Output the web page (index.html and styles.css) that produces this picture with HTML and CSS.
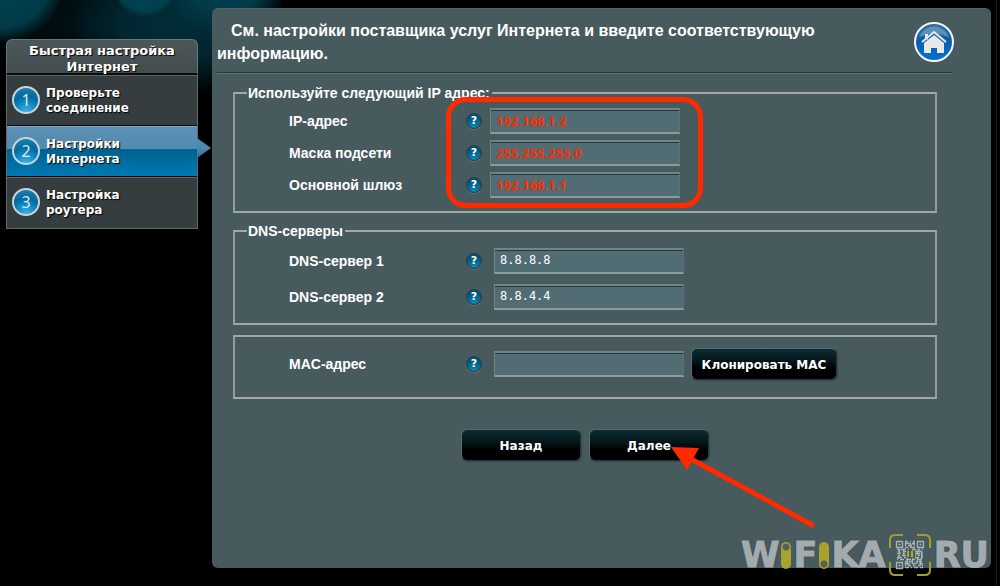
FILE: index.html
```html
<!DOCTYPE html>
<html lang="ru">
<head>
<meta charset="utf-8">
<title>Быстрая настройка Интернет</title>
<link rel="stylesheet" href="styles.css">
</head>
<body>
<div class="page">
  <nav class="wizard">
    <h2 class="wizard-title">Быстрая настройка Интернет</h2>
    <ol class="steps">
      <li class="step"><span class="step-number">1</span><span>Проверьте<br>соединение</span></li>
      <li class="step step-active" aria-current="step"><span class="step-number">2</span><span>Настройки<br>Интернета</span></li>
      <li class="step"><span class="step-number">3</span><span>Настройка<br>роутера</span></li>
    </ol>
  </nav>

  <main class="panel">
    <header class="panel-header">
      <h1 class="panel-title">См. настройки поставщика услуг Интернета и введите соответствующую информацию.</h1>
      <a class="home" href="#" aria-label="Главная">
        <svg width="42" height="42" viewBox="0 0 42 42">
          <defs>
            <linearGradient id="homeFill" x1="0" y1="0" x2="0" y2="1">
              <stop offset="0" stop-color="#3b7298"/><stop offset=".45" stop-color="#075dad"/><stop offset="1" stop-color="#0872d2"/>
            </linearGradient>
          </defs>
          <circle cx="21" cy="21" r="19" fill="url(#homeFill)" stroke="#f4f7f8" stroke-width="2"/>
          <path d="M6 16a16 16 0 0 1 30 0q-15-7-30 0z" fill="#8bb4c9" opacity=".55"/>
          <path d="M12 13h3v6h-3zM11 22l10-8 10 8v10h-7v-5h-6v5h-7z" fill="#e6e8e9"/>
          <path d="M9 22.500 21 12.300l12 10.200" fill="none" stroke="#2d73ab" stroke-width="1"/>
          <path d="M9 21 21 11l12 10" fill="none" stroke="#e6e8e9" stroke-width="2"/>
        </svg>
      </a>
    </header>

    <form class="form">
      <fieldset class="group group-ip">
        <legend>Используйте следующий IP адрес:</legend>
        <div class="row">
          <label for="ip">IP-адрес</label>
          <button type="button" class="help" aria-label="Справка: IP-адрес">?</button>
          <input id="ip" class="field field-marked" type="text" value="192.168.1.2">
        </div>
        <div class="row">
          <label for="mask">Маска подсети</label>
          <button type="button" class="help" aria-label="Справка: маска подсети">?</button>
          <input id="mask" class="field field-marked" type="text" value="255.255.255.0">
        </div>
        <div class="row">
          <label for="gateway">Основной шлюз</label>
          <button type="button" class="help" aria-label="Справка: основной шлюз">?</button>
          <input id="gateway" class="field field-marked" type="text" value="192.168.1.1">
        </div>
        <div class="callout"></div>
      </fieldset>

      <fieldset class="group group-dns">
        <legend>DNS-серверы</legend>
        <div class="row">
          <label for="dns1">DNS-сервер 1</label>
          <button type="button" class="help" aria-label="Справка: DNS-сервер 1">?</button>
          <input id="dns1" class="field" type="text" value="8.8.8.8">
        </div>
        <div class="row">
          <label for="dns2">DNS-сервер 2</label>
          <button type="button" class="help" aria-label="Справка: DNS-сервер 2">?</button>
          <input id="dns2" class="field" type="text" value="8.8.4.4">
        </div>
      </fieldset>

      <fieldset class="group group-mac">
        <div class="row">
          <label for="mac">MAC-адрес</label>
          <button type="button" class="help" aria-label="Справка: MAC-адрес">?</button>
          <input id="mac" class="field" type="text">
          <button type="button" class="button button-clone">Клонировать MAC</button>
        </div>
      </fieldset>

      <div class="actions">
        <button type="button" class="button">Назад</button>
        <div class="next">
          <button type="submit" class="button">Далее</button>
          <svg class="arrow" width="148" height="84" viewBox="0 0 148 84">
            <path d="M20 12 143 79" stroke="#ff2a00" stroke-width="5"/>
            <path d="M0 0 28 1 16 23z" fill="#ff2a00"/>
          </svg>
        </div>
      </div>
    </form>
  </main>
</div>

<div class="watermark">
  <span>W</span><i class="pill"></i><span>F</span><i class="pill pill-low"></i><span>KA</span>
  <svg class="qr" width="42" height="42" viewBox="0 0 42 42" fill="none">
    <path d="M1 14V6q0-5 5-5h8M28 1h8q5 0 5 5v8M41 28v8q0 5-5 5h-8M14 41H6q-5 0-5-5v-8" stroke="#a39d2a" stroke-width="2"/>
    <g stroke="#a9b2b5" stroke-width="1.300">
      <path d="M7.500 7.500h6v6h-6zM28.500 7.500h6v6h-6zM7.500 28.500h6v6h-6z"/>
      <path d="M16 7.500h3m2 0h1m2 0h2M17 9.500h4m2 0h3M16 11.500h1m2 0h4m2 0h1M16 13.500h3m3 0h4M8 15.500h3m1 0h5m2 0h1m3 0h4m2 0h2m2 0h1M9 17.500h2m3 0h3m9 0h2m1 0h4M8 19.500h4m2 0h2m10 0h5m2 0h1M10 21.500h1m2 0h4m9 0h1m2 0h2m1 0h2M8 23.500h5m2 0h2m9 0h4m2 0h2M8 25.500h1m2 0h4m2 0h5m2 0h2m2 0h5M16 27.500h2m2 0h4m3 0h1m2 0h3M17 29.500h4m2 0h5m2 0h4M16 31.500h1m2 0h3m2 0h2m3 0h2m2 0h1M16 33.500h4m2 0h1m2 0h4m2 0h3"/>
      <path d="M16.500 8v4m5-3v5m3-6v3m-14 4v5m4-4v6m-5-1v4m19-9v5m4-4v8m-4-2v6m3-4v7m-8-8v6m-5-6v7m-2-4v4"/>
    </g>
    <path d="M10 10h1v1h-1zM31 10h1v1h-1zM10 31h1v1h-1z" stroke="#a9b2b5"/>
    <path d="M19 17v6M23 17v6" stroke="#b4ac25" stroke-width="2"/>
  </svg>
  <span>RU</span>
</div>
</body>
</html>
```
FILE: styles.css
```css
* {
  box-sizing: border-box;
}

body {
  margin: 0;
  min-height: 100vh;
  position: relative;
  color: #fff;
  font-family: "Liberation Sans", Arial, sans-serif;
  background:
    linear-gradient(#161819, #161819) right 3px top / 1px 100% no-repeat,
    radial-gradient(circle at 0 -22px, #014454 0, #013a47 50px, transparent 66px) no-repeat,
    radial-gradient(circle at 145px -17px, #014857 0, #013f4d 28px, transparent 34px) no-repeat,
    radial-gradient(ellipse at 225px -14px, #014656 0, #013947 36px, transparent 64px) no-repeat,
    radial-gradient(ellipse at 175px 25px, #012c36 0, #012731 52px, transparent 105px) no-repeat,
    radial-gradient(ellipse at 90px 20px, #011218 0, #000 130px) no-repeat,
    #000;
}

.page {
  display: flex;
  align-items: stretch;
  gap: 14px;
  min-height: 100vh;
  padding: 8px 9px 18px 6px;
}

/* Wizard steps */
.wizard {
  flex: 0 0 192px;
  margin-top: 31px;
  font: bold 12px/15px "DejaVu Sans", Verdana, sans-serif;
  text-shadow: 1px 1px 1px #000;
}

.wizard-title {
  margin: 0;
  padding: 3px 16px 0;
  height: 36px;
  font-size: 13px;
  line-height: 16px;
  text-align: center;
  background: linear-gradient(#4c5759, #434d50);
  border: 1px solid #68777b;
  border-bottom: 2px solid #0a0c0d;
  border-radius: 6px 6px 0 0;
}

.steps {
  margin: 0;
  padding: 0;
  list-style: none;
  border: 1px solid #5f6b6e;
  border-top: 0;
}

.step {
  position: relative;
  display: flex;
  align-items: center;
  gap: 6px;
  height: 51px;
  padding: 0 5px;
  background: #353d3f;
  border-top: 1px solid #5b6668;
  border-bottom: 1px solid #080a0a;
}

.step:last-child {
  border-bottom: 0;
}

.step-active {
  background: linear-gradient(#5d90b5 0, #528ab0 45%, #00618f 46%, #0079b2 100%);
  border-top-color: #80a9c4;
}

.step-active::after {
  content: "";
  position: absolute;
  left: 100%;
  top: 11px;
  width: 14px;
  height: 20px;
  background: linear-gradient(#5088ae 50%, #316f99);
  clip-path: polygon(0 0, 100% 50%, 0 100%);
}

.step-number {
  width: 28px;
  height: 28px;
  margin-bottom: 2px;
  font: 16px/24px "Noto Sans", sans-serif;
  color: #d5e9f4;
  text-align: center;
  text-shadow: none;
  border: 2px solid #c5d4dc;
  border-radius: 50%;
  background: radial-gradient(circle at 50% 100%, #3fb5ec 0, #087eb7 45%, #04699b 60%, #2486b4 100%);
}

/* Main panel */
.panel {
  flex: 1;
  min-width: 0;
  background: #475a5e;
  border-radius: 6px;
  border-top: 1px solid #526569;
}

.panel-header {
  display: flex;
  justify-content: space-between;
  align-items: flex-start;
  margin: 0 39px 0 5px;
  padding: 10px 0 8px;
  height: 64px;
  border-bottom: 1px solid #2b3537;
  box-shadow: 0 1px #617377;
}

.panel-title {
  max-width: 640px;
  margin: 0;
  font-size: 16px;
  line-height: 23px;
  text-indent: 14px;
}

.home {
  flex: none;
  margin: 2px -3px 0 0;
}

.form {
  display: flex;
  flex-direction: column;
  gap: 10px;
  margin: 12px 54px 0 21px;
}

.group {
  position: relative;
  display: flex;
  flex-direction: column;
  min-width: 0;
  margin: 0;
  padding: 0 0 0 54px;
  border: 2px solid #a3a7a8;
  border-color: #a3a7a8 #969c9d #a3a7a8 #969c9d;
  font-size: 14px;
  font-weight: bold;
}

.group legend {
  margin-left: -42px;
  padding: 0 2px 0 1px;
  line-height: 16px;
}

.group-ip {
  padding-top: 4px;
  padding-bottom: 10px;
}

.group-dns {
  padding-top: 4px;
  padding-bottom: 8px;
}

.group-mac {
  padding-top: 11px;
  padding-bottom: 17px;
}

.row {
  display: grid;
  grid-template-columns: 177px 28px 190px auto;
  justify-content: start;
  align-items: center;
}

.group-ip .row {
  grid-template-columns: 177px 24px 190px;
  padding: 3px 0;
}

.group-dns .row {
  padding: 5px 0;
}

.row label {
  line-height: 16px;
}

.help {
  width: 16px;
  height: 16px;
  padding: 0;
  border: 1px solid #213f4b;
  border-radius: 50%;
  background: radial-gradient(circle at 50% 100%, #118bb7 0, #07516e 75%);
  box-shadow: 0 1px #62747a;
  color: #fff;
  font: bold 11px/14px "DejaVu Sans", sans-serif;
}

.field {
  width: 190px;
  height: 26px;
  padding: 0 5px 2px;
  border: 1px solid #71858a;
  border-top: 2px solid #748388;
  border-bottom: 2px solid #8d9b9f;
  border-right-color: #5c7076;
  background: #526c73;
  box-shadow: inset 0 1px #263538;
  color: #fff;
  font: 12px "DejaVu Sans Mono", "Liberation Mono", monospace;
}

.field-marked {
  padding-bottom: 0;
  color: #ff2a00;
  font: bold 13px "Open Sans", "Noto Sans", sans-serif;
}

.button {
  width: 120px;
  height: 32px;
  padding: 2px 0 0;
  border: 1px solid #596b70;
  border-right-color: #26363a;
  border-bottom-color: #26363a;
  border-radius: 6px;
  background: linear-gradient(#0c2d33 0, #031316 45%, #000 65%);
  box-shadow: 1px 1px 1px #35464a;
  color: #fff;
  font: bold 12px "DejaVu Sans", Verdana, sans-serif;
}

.button-clone {
  width: 146px;
  margin-left: 7px;
}

.actions {
  display: flex;
  justify-content: center;
  gap: 8px;
  margin-top: 20px;
}

/* Annotations */
.callout {
  position: absolute;
  left: 211px;
  top: -4px;
  width: 257px;
  height: 111px;
  border: 5px solid #ff2a00;
  border-radius: 20px;
  pointer-events: none;
}

.next {
  position: relative;
}

.arrow {
  position: absolute;
  left: 82px;
  top: 18px;
  pointer-events: none;
}

.watermark {
  position: absolute;
  right: 11px;
  bottom: 10px;
  display: flex;
  align-items: center;
  color: #a3abae;
  font: bold 35px/42px "DejaVu Sans", sans-serif;
  -webkit-text-stroke: 1px #a3abae;
  text-shadow: 0 0 2px #263235;
  pointer-events: none;
}

.pill {
  width: 10px;
  height: 27px;
  margin: 0 2px;
  border-radius: 5px;
  background: radial-gradient(circle at 50% 5px, #55615a 0 3px, #a9a22c 4px);
}

.pill-low {
  background: radial-gradient(circle at 50% 22px, #55615a 0 3px, #a9a22c 4px);
}

.qr {
  margin: 0 3px;
}
```
